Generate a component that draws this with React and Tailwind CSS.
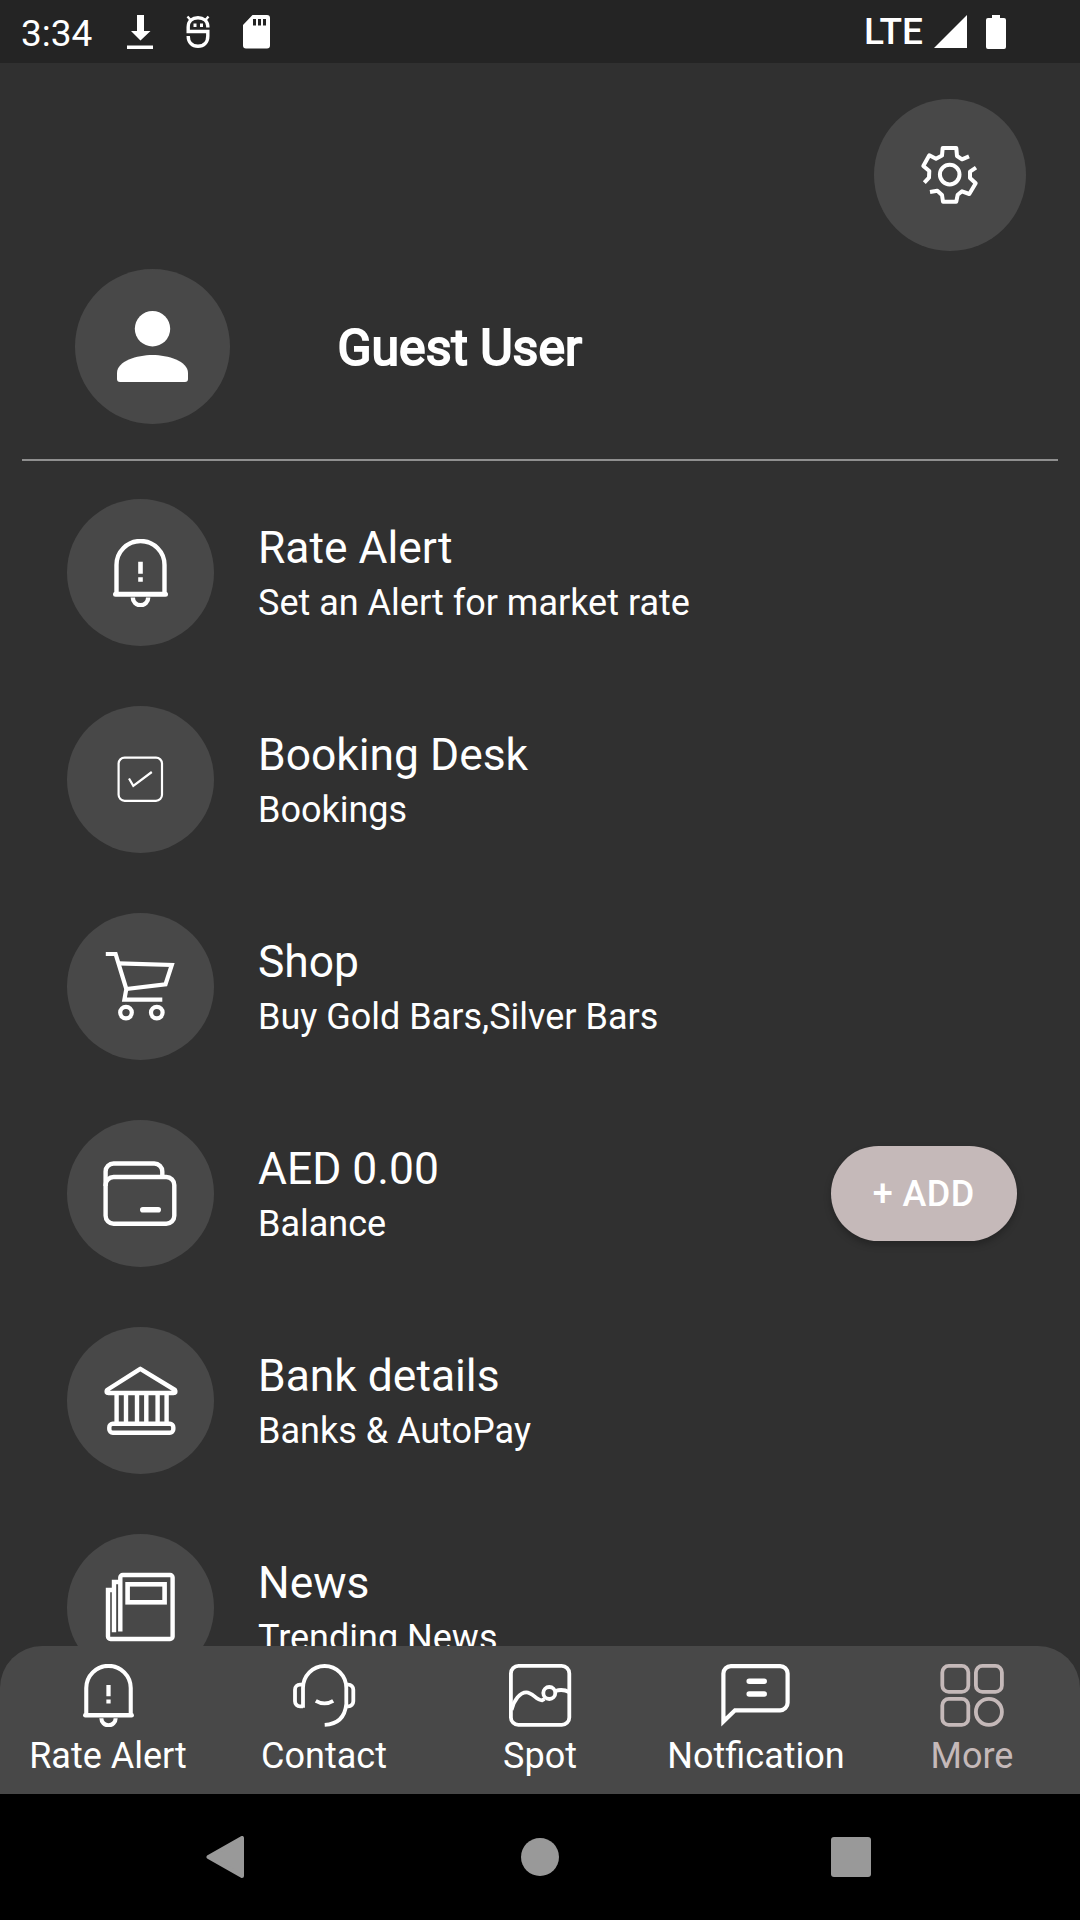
import React, { useState } from 'react';

const BellIcon = ({ className }) => (
  <svg viewBox="46.6 40 54.8 68" className={className} fill="none" stroke="currentColor" strokeWidth="4.4">
    <path d="M50 95V66a24 24 0 0 1 48 0v29" />
    <path d="M49 95.3h50" strokeWidth="5" strokeLinecap="round" />
    <path d="M66.3 98.5a7.7 7.7 0 0 0 15.4 0" />
    <path d="M74 62.7v12M74 78.3v4.4" strokeWidth="4.6" />
  </svg>
);

const CheckIcon = () => (
  <svg viewBox="0 0 147 147" className="size-full" fill="none" stroke="currentColor" strokeWidth="2.2">
    <rect x="51.6" y="51.6" width="43.4" height="43.2" rx="6" />
    <path d="M62 72.5l4.3 7.3L84.8 66" />
  </svg>
);

const CartIcon = () => (
  <svg viewBox="0 0 147 147" className="size-full" fill="none" stroke="currentColor" strokeWidth="4.2">
    <path d="M38.8 41h9.8l10.7 35-1.9 10.6h37.9" />
    <path d="M51.5 50.3l53.3 1.7-6.3 19.3L59.3 76" />
    <circle cx="59" cy="99.6" r="5.8" />
    <circle cx="89.8" cy="99.6" r="5.8" />
  </svg>
);

const WalletIcon = () => (
  <svg viewBox="0 0 147 147" className="size-full" fill="none" stroke="currentColor" strokeWidth="4.4">
    <rect x="38.6" y="57" width="68.7" height="46.7" rx="8" />
    <path d="M38.6 66V51.5a8 8 0 0 1 8-8h40.7a8 8 0 0 1 8 8V57" />
    <path d="M75.8 89.7h15.4" strokeWidth="5.6" strokeLinecap="round" />
  </svg>
);

const BankIcon = () => (
  <svg viewBox="0 0 147 147" className="size-full" fill="none" stroke="currentColor" strokeWidth="4.4" strokeLinejoin="round">
    <path d="M73.3 41.8L40 63q-1.5 3 1.5 3h65q3 0 1.5-3z" />
    <path d="M49.6 67v28M59 67v28M70 67v28M79.3 67v28M90.6 67v28M99.6 67v28" />
    <rect x="42.3" y="96.7" width="64" height="9" rx="3.5" />
  </svg>
);

const NewsIcon = () => (
  <svg viewBox="0 0 147 147" className="size-full" fill="none" stroke="currentColor" strokeWidth="4.4">
    <path d="M53.3 97.5V43.5a2.5 2.5 0 0 1 2.5-2.5h47.3a2.5 2.5 0 0 1 2.5 2.5v59a2.5 2.5 0 0 1-2.5 2.5H43.5a2.5 2.5 0 0 1-2.5-2.5V56h6" />
    <path d="M47 98.3V48h6" />
    <rect x="60.6" y="50.3" width="37" height="18" strokeWidth="4.6" />
  </svg>
);

const GearIcon = () => (
  <svg viewBox="0 0 152 152" className="size-full" fill="none" stroke="currentColor" strokeWidth="4" strokeLinejoin="round">
    <path d="M95 57.3l-7 3-5-3.3-.7-8H68.7L68 56.5l-6 3.2-6.7-3.4-6 10.7 6 5-.3 6.7-4.7 5" />
    <path d="M56 93l7.3-1.3L68 96l1 6.7h13.3l1.4-7 4.3-3.4 7.3 2.7 6.4-10.7L96 79v-6.3l6-4" />
    <circle cx="75.7" cy="75.6" r="9.8" />
  </svg>
);

const ContactIcon = () => (
  <svg viewBox="0 0 64 64" className="size-16" fill="none" stroke="currentColor" strokeWidth="3.8">
    <path d="M11 43.7V24a21.65 22 0 0 1 43.3 0v16q-2 20-21.6 20.8" />
    <path d="M11 20.7H8a5 5 0 0 0-5 5v11.6a5 5 0 0 0 5 5h3M54.3 20.7h2a5 5 0 0 1 5 5v11.6a5 5 0 0 1-5 5h-2" />
    <path d="M23.8 36.8q8.8 5.2 17.4 0" />
  </svg>
);

const SpotIcon = () => (
  <svg viewBox="0 0 64 64" className="size-16" fill="none" stroke="currentColor" strokeWidth="3.8">
    <rect x="2.9" y="1.9" width="58.4" height="59" rx="7.5" />
    <path d="M3.5 46C6 36 12 28.3 18.3 28.3c6.5 0 9.7 8 15.7 8l2.5-1.5" />
    <circle cx="41.3" cy="29" r="6" />
    <path d="M47.5 27q7-2.5 14 1.2" />
  </svg>
);

const MessageIcon = () => (
  <svg viewBox="0 0 72 64" className="h-16 w-[72px]" fill="none" stroke="currentColor" strokeWidth="4.2">
    <path d="M3.4 57.5V9.5A7.500 7.500 0 0 1 10.900 2.100h49.200A7.500 7.500 0 0 1 67.600 9.500v29.300a7.500 7.500 0 0 1-7.500 7.500H15z" />
    <path d="M29.200 17.300h15M29.200 30h15" strokeWidth="5.5" strokeLinecap="round" />
  </svg>
);

const MoreIcon = () => (
  <svg viewBox="0 0 64 64" className="size-16" fill="none" stroke="currentColor" strokeWidth="3.8">
    <rect x="2.3" y="1.9" width="26" height="26" rx="6.5" />
    <rect x="35.9" y="1.9" width="26" height="26" rx="6.5" />
    <rect x="2.3" y="34.9" width="26" height="26" rx="6.5" />
    <circle cx="48.9" cy="47.9" r="13" />
  </svg>
);

const menuItems = [
  { title: 'Rate Alert', subtitle: 'Set an Alert for market rate', icon: <BellIcon className="mt-px h-[68px] w-[55px]" /> },
  { title: 'Booking Desk', subtitle: 'Bookings', icon: <CheckIcon /> },
  { title: 'Shop', subtitle: 'Buy Gold Bars,Silver Bars', icon: <CartIcon /> },
  { title: 'AED 0.00', subtitle: 'Balance', icon: <WalletIcon />, action: '+ ADD' },
  { title: 'Bank details', subtitle: 'Banks & AutoPay', icon: <BankIcon /> },
  { title: 'News', subtitle: 'Trending News', icon: <NewsIcon /> },
];

const tabs = [
  { label: 'Rate Alert', icon: <BellIcon className="h-[63px] w-[51px]" /> },
  { label: 'Contact', icon: <ContactIcon /> },
  { label: 'Spot', icon: <SpotIcon /> },
  { label: 'Notfication', icon: <MessageIcon /> },
  { label: 'More', icon: <MoreIcon /> },
];

function StatusBar() {
  return (
    <div className="flex h-[63px] shrink-0 items-center justify-between bg-[#242424] pl-[21px] pr-[74px]">
      <div className="flex items-center">
        <span className="w-[106px] pt-[4px] text-[37px] leading-none">3:34</span>
        <svg viewBox="0 0 26 34" className="h-[34px] w-[26px]" fill="currentColor">
          <path d="M10 0h7v16h6.5L13.5 25.5 4 16h6zM0 30.500h26V34H0z" />
        </svg>
        <svg viewBox="0 0 26 34" className="ml-8 h-[34px] w-[26px]" fill="none" stroke="currentColor" strokeWidth="3.4">
          <path d="M22.800 12.500V11C22.500 6 18.500 2.800 13 2.800S3.200 6 3.200 12v4.500h19.600v4.500c0 6.500-4 10.300-9.800 10.300S3.200 27.500 3.200 21" />
          <path d="M2.500 1.500l3 3.500M23.500 1.500l-3 3.500" strokeWidth="2.4" />
          <path d="M8.500 10.200h3M15 10.200h3" />
        </svg>
        <svg viewBox="0 0 27 34" className="ml-[32px] h-[34px] w-[27px]" fill="currentColor" fillRule="evenodd">
          <path d="M9.500 0H24a3 3 0 0 1 3 3v27.500a3 3 0 0 1-3 3H3a3 3 0 0 1-3-3V10zM10 4v6.500h3V4zm5 0v6.500h3V4zm5 0v6.500h3V4z" />
        </svg>
      </div>
      <div className="flex items-center">
        <span className="mr-[11px] text-[37px] font-medium leading-none">LTE</span>
        <svg viewBox="0 0 33 33" className="size-[33px]" fill="currentColor">
          <path d="M33 0v33H0z" />
        </svg>
        <svg viewBox="0 0 20 34" className="ml-[19px] h-[34px] w-5" fill="currentColor">
          <path d="M6 0h8v3h4a2 2 0 0 1 2 2v27a2 2 0 0 1-2 2H2a2 2 0 0 1-2-2V5a2 2 0 0 1 2-2h4z" />
        </svg>
      </div>
    </div>
  );
}

function MenuRow({ item }) {
  return (
    <div className="flex h-[147px] shrink-0 pl-[66.5px] pr-[63px]">
      <div className="flex size-[147px] shrink-0 items-center justify-center rounded-full bg-[#484848]">
        {item.icon}
      </div>
      <div className="ml-[44.5px] flex-1 pt-[21px]">
        <h3 className="text-[44.4px] leading-[56px]">{item.title}</h3>
        <p className="text-[36px] leading-[54px]">{item.subtitle}</p>
      </div>
      {item.action && (
        <button className="mt-[26px] h-[94.5px] w-[186.5px] rounded-full bg-[#c5b9b9] pt-[2px] text-[36px] font-medium tracking-[0.4px] shadow-[0_4px_7px_rgba(0,0,0,0.25)]">
          {item.action}
        </button>
      )}
    </div>
  );
}

function App() {
  const [activeTab, setActiveTab] = useState('More');

  return (
    <div className="flex h-[1920px] w-[1080px] flex-col overflow-hidden bg-[#303030] font-['Roboto',sans-serif] text-white">
      <StatusBar />

      <div className="flex flex-1 flex-col overflow-hidden">
        <div className="flex shrink-0 justify-end pr-[54px] pt-9">
          <button className="size-[152px] rounded-full bg-[#484848]">
            <GearIcon />
          </button>
        </div>

        <div className="mt-[18px] flex shrink-0 items-center pl-[74.5px]">
          <div className="flex size-[155px] items-center justify-center rounded-full bg-[#484848]">
            <svg viewBox="0 0 71 71" className="size-[71px]" fill="currentColor">
              <circle cx="35.5" cy="17.7" r="17.7" />
              <path d="M0 62c0-12 20-18 35.5-18S71 50 71 62v6a3 3 0 0 1-3 3H3a3 3 0 0 1-3-3z" />
            </svg>
          </div>
          <h2 className="ml-[108px] pt-[2px] text-[50px] leading-none [-webkit-text-stroke:2px_white]">Guest User</h2>
        </div>

        <div className="mx-[22px] mt-[35px] h-[1.5px] shrink-0 bg-[#8f8f8f]" />

        <div className="mt-[38.5px] flex flex-col gap-[60px]">
          {menuItems.map((item) => (
            <MenuRow key={item.title} item={item} />
          ))}
        </div>
      </div>

      <div className="grid h-[148px] shrink-0 grid-cols-5 rounded-t-[42px] bg-[#484848]">
        {tabs.map((tab) => (
          <button
            key={tab.label}
            onClick={() => setActiveTab(tab.label)}
            className={`flex flex-col items-center pt-[18px] ${activeTab === tab.label ? 'text-[#c5b9b9]' : 'text-white'}`}
          >
            <span className="flex h-16 items-start">{tab.icon}</span>
            <span className="mt-[7px] text-[36px] leading-[42px]">{tab.label}</span>
          </button>
        ))}
      </div>

      {/* Android navigation buttons */}
      <div className="grid h-[126px] shrink-0 grid-cols-[450px_180px_450px] items-center bg-black text-[#999]">
        <svg viewBox="0 0 38 42" className="ml-[206px] h-[42px] w-[38px]" fill="currentColor" stroke="currentColor" strokeWidth="4" strokeLinejoin="round">
          <path d="M36 2v38L2.5 21z" />
        </svg>
        <div className="size-[38px] justify-self-center rounded-full bg-[#999]" />
        <div className="ml-[201px] size-10 rounded-[3px] bg-[#999]" />
      </div>
    </div>
  );
}

export default App;
